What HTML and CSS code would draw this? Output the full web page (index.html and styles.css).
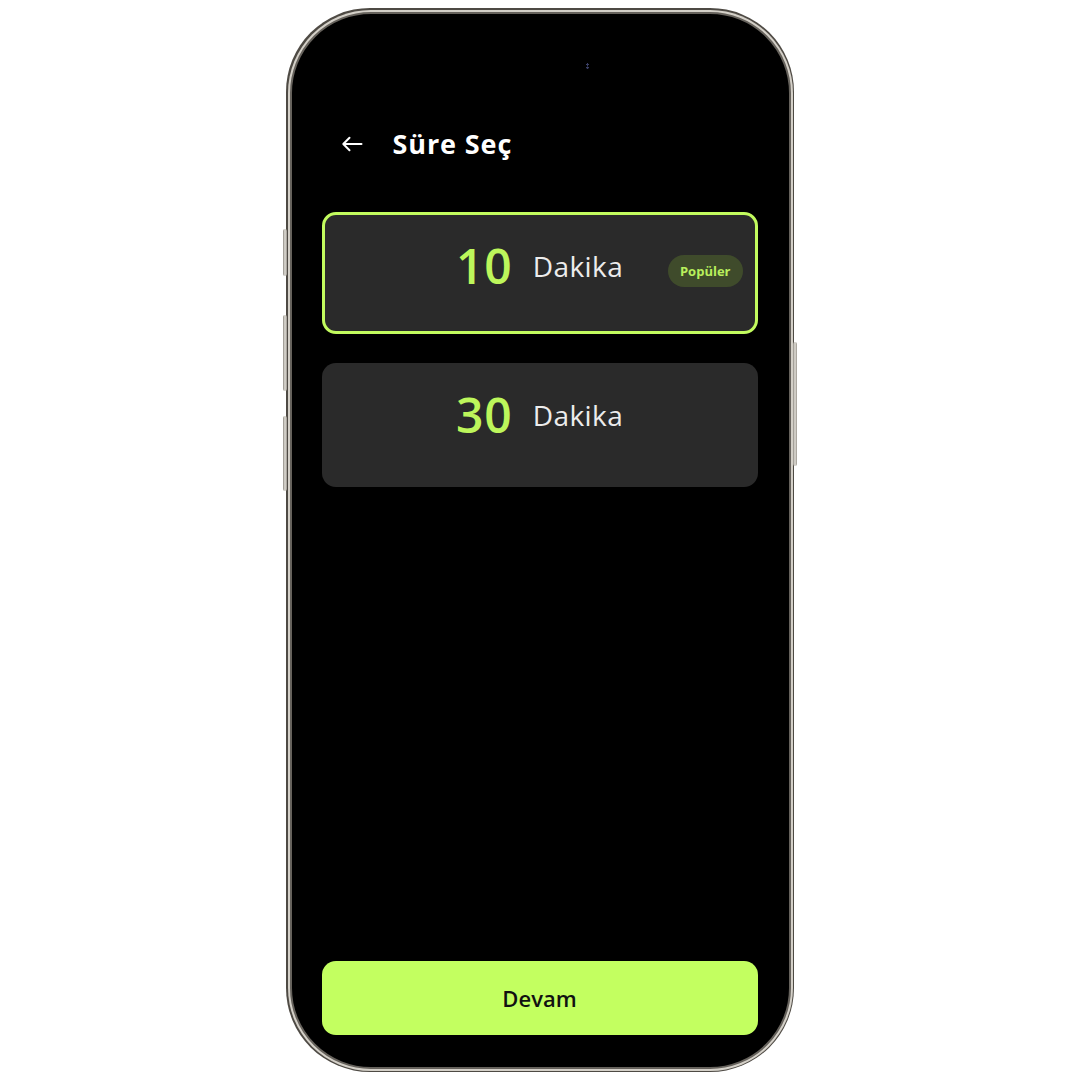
FILE: index.html
```html
<!DOCTYPE html>
<html lang="tr">
<head>
<meta charset="utf-8">
<title>Süre Seç</title>
<link rel="stylesheet" href="styles.css">
</head>
<body>
<div class="stage">
  <div class="phone">
    <span class="side-btn btn-action"></span>
    <span class="side-btn btn-vol-up"></span>
    <span class="side-btn btn-vol-down"></span>
    <span class="side-btn btn-power"></span>
    <div class="bezel">
      <div class="screen">
        <span class="sensor"></span>
        <header class="header">
          <svg class="back" width="22" height="16" viewBox="0 0 22 16" aria-hidden="true">
            <path d="M20.5 8H2.5M8.5 1.8L2.3 8l6.2 6.2" fill="none" stroke="#fff" stroke-width="2" stroke-linecap="round" stroke-linejoin="round"/>
          </svg>
          <h1 class="title">Süre Seç</h1>
        </header>
        <div class="options">
          <div class="option selected">
            <span class="num">10</span>
            <span class="unit">Dakika</span>
            <span class="badge">Popüler</span>
          </div>
          <div class="option">
            <span class="num">30</span>
            <span class="unit">Dakika</span>
          </div>
        </div>
        <button class="cta">Devam</button>
      </div>
    </div>
  </div>
</div>
</body>
</html>
```
FILE: styles.css
```css
* { box-sizing: border-box; }
html, body { margin: 0; padding: 0; background: #fff; }
body { font-family: "Open Sans", "Noto Sans", sans-serif; }

.stage {
  width: 1080px;
  height: 1080px;
  display: flex;
  justify-content: center;
  padding-top: 8px;
}

.phone {
  position: relative;
  width: 508px;
  height: 1064px;
  border-radius: 84px;
  background: #4e4a44;
  padding: 1.5px;
}

.bezel {
  width: 100%;
  height: 100%;
  border-radius: 83px;
  background: #d4d0c8;
  padding: 2px;
}

.screen {
  position: relative;
  width: 100%;
  height: 100%;
  border-radius: 81px;
  background: #000;
  border: 2px solid #66625c;
  display: flex;
  flex-direction: column;
  padding: 0 31px 32px 30px;
}

.side-btn {
  position: absolute;
  width: 4px;
  background: linear-gradient(90deg, #8e8a83, #e2dfd8 50%, #9a968f);
  border-radius: 2px;
}
.btn-action { left: -3px; top: 221px; height: 47px; }
.btn-vol-up { left: -3px; top: 307px; height: 76px; }
.btn-vol-down { left: -3px; top: 408px; height: 75px; }
.btn-power { right: -3px; top: 334px; height: 124px; }

.sensor {
  position: absolute;
  left: 294px;
  top: 49px;
  width: 3px;
  height: 6px;
  background: radial-gradient(circle at 50% 25%, #3a3f66 1px, transparent 1.4px),
              radial-gradient(circle at 50% 78%, #3a3f66 1px, transparent 1.4px);
}

.header {
  display: flex;
  align-items: center;
  height: 40px;
  margin-top: 110px;
  padding-left: 19px;
}
.back { display: block; }
.title {
  margin: 0 0 0 30px;
  color: #fff;
  font-size: 27px;
  font-weight: 700;
  letter-spacing: 0.9px;
}

.options {
  display: flex;
  flex-direction: column;
  gap: 29px;
  margin-top: 48px;
}

.option {
  position: relative;
  height: 124px;
  border-radius: 14px;
  background: #2a2a2a;
  display: flex;
  align-items: center;
  justify-content: center;
  gap: 20px;
  padding-bottom: 20px;
}
.option.selected {
  border: 3px solid #c2fb5e;
  height: 122px;
  padding-bottom: 14px;
}

.num {
  color: #bdf65b;
  font-size: 48px;
  font-weight: 600;
  line-height: 1;
  letter-spacing: 1px;
}
.unit {
  color: #ececec;
  font-size: 28px;
  font-weight: 400;
  line-height: 1;
  letter-spacing: 0.4px;
}

.badge {
  position: absolute;
  right: 12px;
  top: 40px;
  height: 32px;
  padding: 0 12px;
  border-radius: 16px;
  background: #3f4b2b;
  color: #b9ef5c;
  font-size: 13px;
  font-weight: 700;
  display: flex;
  align-items: center;
}

.cta {
  margin-top: auto;
  height: 74px;
  width: 100%;
  border: none;
  border-radius: 14px;
  background: #c3ff60;
  color: #111;
  font-family: "Open Sans", "Noto Sans", sans-serif;
  font-size: 22px;
  font-weight: 600;
}
```
